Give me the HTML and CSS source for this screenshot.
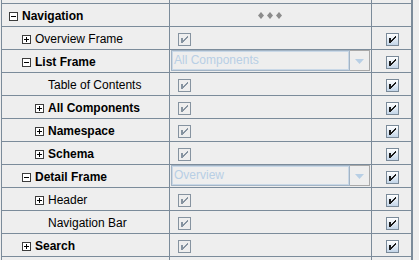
FILE: index.html
```html
<!DOCTYPE html>
<html>
<head>
<meta charset="utf-8">
<link rel="stylesheet" href="styles.css">
</head>
<body>
<div class="pane">
  <div class="row partial-top"><div class="cell"></div><div class="cell"></div><div class="cell"></div></div>

  <div class="row">
    <div class="cell name lvl0"><span class="toggle minus"></span><b>Navigation</b></div>
    <div class="cell center"><svg class="dots" width="26" height="7" viewBox="0 0 26 7"><polygon points="3,0 6,3.5 3,7 0,3.5"/><polygon points="12,0 15,3.5 12,7 9,3.5"/><polygon points="21,0 24,3.5 21,7 18,3.5"/></svg></div>
    <div class="cell"></div>
  </div>

  <div class="row">
    <div class="cell name lvl1"><span class="toggle plus"></span><span>Overview Frame</span></div>
    <div class="cell opt"><span class="cb dis"><svg width="11" height="11" viewBox="0 0 11 11"><path d="M2 4h2v5h-2z M8 2h1v2h-1z M7 3h1v2h-1z M6 4h1v2h-1z M5 5h1v2h-1z M4 6h1v2h-1z"/></svg></span></div>
    <div class="cell sel"><span class="cb"><svg width="11" height="11" viewBox="0 0 11 11"><path d="M2 4h2v5h-2z M8 2h1v2h-1z M7 3h1v2h-1z M6 4h1v2h-1z M5 5h1v2h-1z M4 6h1v2h-1z"/></svg></span></div>
  </div>

  <div class="row">
    <div class="cell name lvl1"><span class="toggle minus"></span><b>List Frame</b></div>
    <div class="cell combo-cell"><div class="combo"><span class="combo-text">All Components</span><span class="combo-btn"><svg width="9" height="5" viewBox="0 0 9 5"><polygon points="0,0 9,0 4.5,5"/></svg></span></div></div>
    <div class="cell sel"><span class="cb"><svg width="11" height="11" viewBox="0 0 11 11"><path d="M2 4h2v5h-2z M8 2h1v2h-1z M7 3h1v2h-1z M6 4h1v2h-1z M5 5h1v2h-1z M4 6h1v2h-1z"/></svg></span></div>
  </div>

  <div class="row">
    <div class="cell name lvl2"><span class="leaf"></span><span>Table of Contents</span></div>
    <div class="cell opt"><span class="cb dis"><svg width="11" height="11" viewBox="0 0 11 11"><path d="M2 4h2v5h-2z M8 2h1v2h-1z M7 3h1v2h-1z M6 4h1v2h-1z M5 5h1v2h-1z M4 6h1v2h-1z"/></svg></span></div>
    <div class="cell sel"><span class="cb"><svg width="11" height="11" viewBox="0 0 11 11"><path d="M2 4h2v5h-2z M8 2h1v2h-1z M7 3h1v2h-1z M6 4h1v2h-1z M5 5h1v2h-1z M4 6h1v2h-1z"/></svg></span></div>
  </div>

  <div class="row">
    <div class="cell name lvl2"><span class="toggle plus"></span><b>All Components</b></div>
    <div class="cell opt"><span class="cb dis"><svg width="11" height="11" viewBox="0 0 11 11"><path d="M2 4h2v5h-2z M8 2h1v2h-1z M7 3h1v2h-1z M6 4h1v2h-1z M5 5h1v2h-1z M4 6h1v2h-1z"/></svg></span></div>
    <div class="cell sel"><span class="cb"><svg width="11" height="11" viewBox="0 0 11 11"><path d="M2 4h2v5h-2z M8 2h1v2h-1z M7 3h1v2h-1z M6 4h1v2h-1z M5 5h1v2h-1z M4 6h1v2h-1z"/></svg></span></div>
  </div>

  <div class="row">
    <div class="cell name lvl2"><span class="toggle plus"></span><b>Namespace</b></div>
    <div class="cell opt"><span class="cb dis"><svg width="11" height="11" viewBox="0 0 11 11"><path d="M2 4h2v5h-2z M8 2h1v2h-1z M7 3h1v2h-1z M6 4h1v2h-1z M5 5h1v2h-1z M4 6h1v2h-1z"/></svg></span></div>
    <div class="cell sel"><span class="cb"><svg width="11" height="11" viewBox="0 0 11 11"><path d="M2 4h2v5h-2z M8 2h1v2h-1z M7 3h1v2h-1z M6 4h1v2h-1z M5 5h1v2h-1z M4 6h1v2h-1z"/></svg></span></div>
  </div>

  <div class="row">
    <div class="cell name lvl2"><span class="toggle plus"></span><b>Schema</b></div>
    <div class="cell opt"><span class="cb dis"><svg width="11" height="11" viewBox="0 0 11 11"><path d="M2 4h2v5h-2z M8 2h1v2h-1z M7 3h1v2h-1z M6 4h1v2h-1z M5 5h1v2h-1z M4 6h1v2h-1z"/></svg></span></div>
    <div class="cell sel"><span class="cb"><svg width="11" height="11" viewBox="0 0 11 11"><path d="M2 4h2v5h-2z M8 2h1v2h-1z M7 3h1v2h-1z M6 4h1v2h-1z M5 5h1v2h-1z M4 6h1v2h-1z"/></svg></span></div>
  </div>

  <div class="row">
    <div class="cell name lvl1"><span class="toggle minus"></span><b>Detail Frame</b></div>
    <div class="cell combo-cell"><div class="combo"><span class="combo-text">Overview</span><span class="combo-btn"><svg width="9" height="5" viewBox="0 0 9 5"><polygon points="0,0 9,0 4.5,5"/></svg></span></div></div>
    <div class="cell sel"><span class="cb"><svg width="11" height="11" viewBox="0 0 11 11"><path d="M2 4h2v5h-2z M8 2h1v2h-1z M7 3h1v2h-1z M6 4h1v2h-1z M5 5h1v2h-1z M4 6h1v2h-1z"/></svg></span></div>
  </div>

  <div class="row">
    <div class="cell name lvl2"><span class="toggle plus"></span><span>Header</span></div>
    <div class="cell opt"><span class="cb dis"><svg width="11" height="11" viewBox="0 0 11 11"><path d="M2 4h2v5h-2z M8 2h1v2h-1z M7 3h1v2h-1z M6 4h1v2h-1z M5 5h1v2h-1z M4 6h1v2h-1z"/></svg></span></div>
    <div class="cell sel"><span class="cb"><svg width="11" height="11" viewBox="0 0 11 11"><path d="M2 4h2v5h-2z M8 2h1v2h-1z M7 3h1v2h-1z M6 4h1v2h-1z M5 5h1v2h-1z M4 6h1v2h-1z"/></svg></span></div>
  </div>

  <div class="row">
    <div class="cell name lvl2"><span class="leaf"></span><span>Navigation Bar</span></div>
    <div class="cell opt"><span class="cb dis"><svg width="11" height="11" viewBox="0 0 11 11"><path d="M2 4h2v5h-2z M8 2h1v2h-1z M7 3h1v2h-1z M6 4h1v2h-1z M5 5h1v2h-1z M4 6h1v2h-1z"/></svg></span></div>
    <div class="cell sel"><span class="cb"><svg width="11" height="11" viewBox="0 0 11 11"><path d="M2 4h2v5h-2z M8 2h1v2h-1z M7 3h1v2h-1z M6 4h1v2h-1z M5 5h1v2h-1z M4 6h1v2h-1z"/></svg></span></div>
  </div>

  <div class="row">
    <div class="cell name lvl1"><span class="toggle plus"></span><b>Search</b></div>
    <div class="cell opt"><span class="cb dis"><svg width="11" height="11" viewBox="0 0 11 11"><path d="M2 4h2v5h-2z M8 2h1v2h-1z M7 3h1v2h-1z M6 4h1v2h-1z M5 5h1v2h-1z M4 6h1v2h-1z"/></svg></span></div>
    <div class="cell sel"><span class="cb"><svg width="11" height="11" viewBox="0 0 11 11"><path d="M2 4h2v5h-2z M8 2h1v2h-1z M7 3h1v2h-1z M6 4h1v2h-1z M5 5h1v2h-1z M4 6h1v2h-1z"/></svg></span></div>
  </div>

  <div class="row partial-bottom"><div class="cell"></div><div class="cell"></div><div class="cell"></div></div>
</div>
</body>
</html>
```

FILE: styles.css
```css
html, body {
  margin: 0;
  padding: 0;
}
body {
  background: #eeeeee;
  font-family: "Liberation Sans", Arial, sans-serif;
  font-size: 12px;
  color: #000;
  width: 419px;
  height: 260px;
  overflow: hidden;
}
.pane {
  margin-left: 1px;
  width: 412px;
  box-sizing: border-box;
  border-left: 1px solid #7b8b9a;
  border-right: 1px solid #7b8b9a;
}
.row {
  display: grid;
  grid-template-columns: 168px 202px 40px;
  height: 23px;
  box-sizing: border-box;
  border-bottom: 1px solid #7b8b9a;
}
.row.partial-top {
  height: 4px;
}
.row.partial-bottom {
  height: 3px;
  border-bottom: none;
}
.cell {
  box-sizing: border-box;
  border-right: 1px solid #7b8b9a;
  display: flex;
  align-items: center;
  padding-top: 2px;
  white-space: nowrap;
  overflow: hidden;
}
.partial-top .cell,
.partial-bottom .cell {
  padding-top: 0;
}
.name b {
  font-weight: bold;
}
.lvl0 { padding-left: 7px; }
.lvl1 { padding-left: 20px; }
.lvl2 { padding-left: 33px; }
.toggle {
  width: 9px;
  height: 9px;
  box-sizing: border-box;
  border: 1px solid #3c3c3c;
  background: #ffffff;
  margin-right: 4px;
  position: relative;
  flex: none;
}
.toggle::before {
  content: "";
  position: absolute;
  left: 1px;
  top: 3px;
  width: 5px;
  height: 1px;
  background: #000;
}
.toggle.plus::after {
  content: "";
  position: absolute;
  left: 3px;
  top: 1px;
  width: 1px;
  height: 5px;
  background: #000;
}
.leaf {
  width: 13px;
  flex: none;
}
.center {
  justify-content: center;
}
.dots {
  display: block;
  fill: #8c8c8c;
  margin-top: -2px;
}
.opt {
  padding-left: 8px;
}
.sel {
  padding-left: 14px;
}
.cb {
  display: block;
  width: 13px;
  height: 13px;
  box-sizing: border-box;
  border: 1px solid #7a8a99;
  background: linear-gradient(#ffffff, #c3d5e8);
  flex: none;
}
.cb svg {
  display: block;
  shape-rendering: crispEdges;
  fill: #1a1a1a;
}
.cb.dis {
  background: #eeeeee;
  border-color: #8693a0;
}
.cb.dis svg {
  fill: #8693a0;
}
.combo-cell {
  align-items: stretch;
  padding: 0 0 1px 1px;
}
.combo {
  display: flex;
  width: 199px;
  height: 21px;
}
.combo-text {
  flex: 1;
  box-sizing: border-box;
  border: 1px solid #a3b4c5;
  box-shadow: inset 0 0 0 1px #c9d8e7;
  color: #b8cfe5;
  padding: 2px 0 0 2px;
  line-height: 15px;
}
.combo-btn {
  width: 20px;
  box-sizing: border-box;
  border: 1px solid #a8a8a8;
  border-left: none;
  display: flex;
  align-items: center;
  justify-content: center;
  padding-top: 1px;
}
.combo-btn svg {
  display: block;
  fill: #b8cfe5;
}
```
